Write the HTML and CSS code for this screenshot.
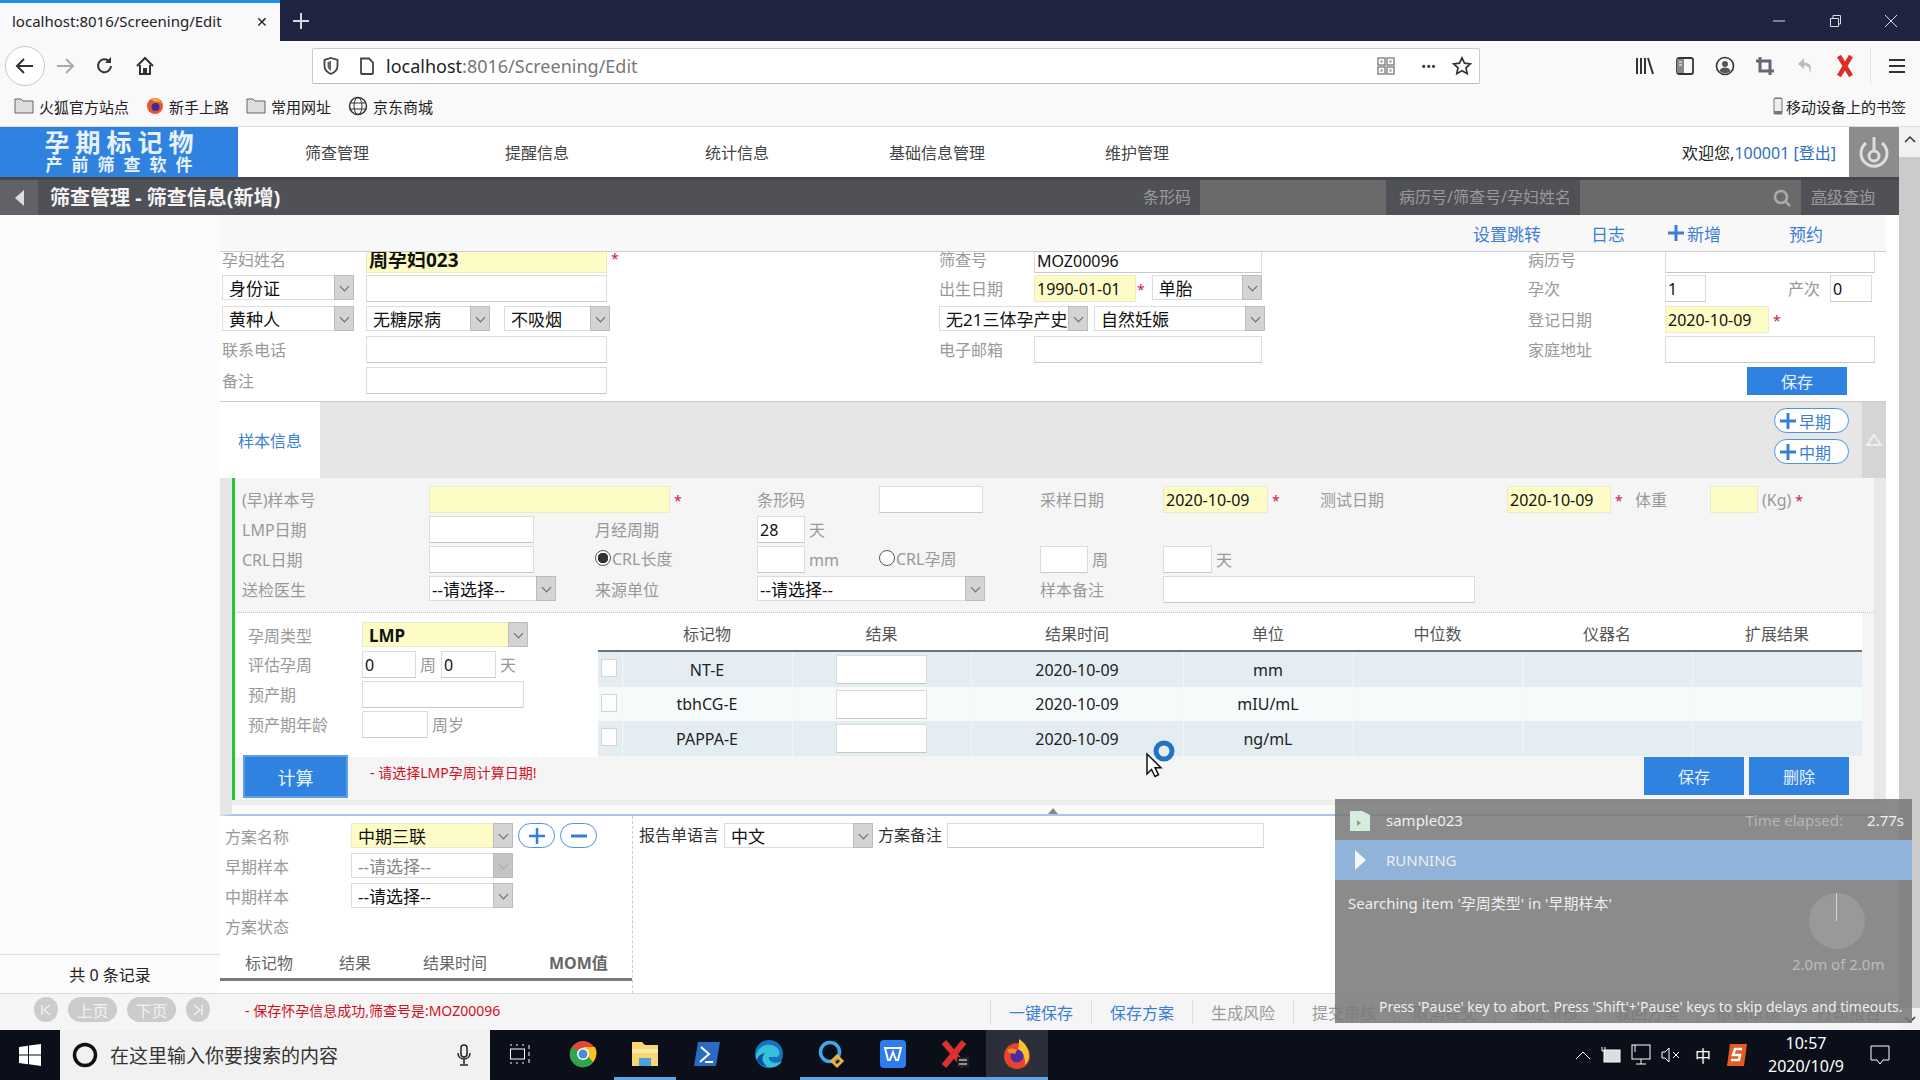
FILE: index.html
```html
<!DOCTYPE html>
<html lang="zh-CN">
<head>
  <meta charset="UTF-8" />
  <title>筛查信息</title>
  <link rel="stylesheet" href="styles.css">
</head>
<body>
  <div class="tabbar">
    <div class="tab"><span class="tab-title">localhost:8016/Screening/Edit</span><span class="tab-close">✕</span></div>
    <svg class="newtab" width="20" height="20" viewBox="0 0 20 20"><path d="M10 2v16M2 10h16" stroke="#d8d8e0" stroke-width="2"/></svg>
    <div class="winctl">
      <svg width="16" height="16" viewBox="0 0 16 16"><path d="M2 8h12" stroke="#ddd" stroke-width="1"/></svg>
      <svg width="16" height="16" viewBox="0 0 16 16"><path d="M3.500 5.500h8v8h-8zM6 5V2.500h7.500V11H12" fill="none" stroke="#ddd"/></svg>
      <svg width="16" height="16" viewBox="0 0 16 16"><path d="M2 2l12 12M14 2L2 14" stroke="#ddd"/></svg>
    </div>
  </div>

  <div class="toolbar">
    <div class="nav-icons">
      <span class="ico back"><svg width="20" height="20" viewBox="0 0 20 20"><path d="M18 10H3M9 3l-7 7 7 7" fill="none" stroke="#333" stroke-width="2"/></svg></span>
      <span class="ico"><svg width="20" height="20" viewBox="0 0 20 20"><path d="M2 10h15M11 3l7 7-7 7" fill="none" stroke="#aaa" stroke-width="2"/></svg></span>
      <span class="ico"><svg width="20" height="20" viewBox="0 0 20 20"><path d="M16 10a6.500 6.500 0 1 1-2-5" fill="none" stroke="#333" stroke-width="2"/><path d="M16 1v6h-6z" fill="#333"/></svg></span>
      <span class="ico"><svg width="20" height="20" viewBox="0 0 20 20"><path d="M2 10l8-8 8 8M5 9v9h4v-5h2v5h4V9" fill="none" stroke="#333" stroke-width="2"/></svg></span>
    </div>
    <div class="urlbar">
      <svg class="url-shield" width="16" height="18" viewBox="0 0 16 18"><path d="M8 1l6.500 2v6c0 4-3 6.500-6.500 8C4.500 15.500 1.500 13 1.500 9V3z" fill="none" stroke="#444" stroke-width="1.800"/><path d="M8 4v10c-2-1-3.500-3-3.500-5V5z" fill="#666"/></svg>
      <svg class="url-page" width="16" height="18" viewBox="0 0 16 18"><path d="M2 1.500h8l4 4V16a1 1 0 0 1-1 1H3a1 1 0 0 1-1-1z" fill="none" stroke="#444" stroke-width="1.800"/></svg>
      <span class="url-text"><b>localhost</b>:8016/Screening/Edit</span>
      <svg class="url-qr" width="18" height="18" viewBox="0 0 18 18"><path d="M1 1h7v7H1zM10 1h7v7h-7zM1 10h7v7H1zM10 10h7v7h-7z" fill="none" stroke="#888" stroke-width="1.500"/><path d="M3.500 3.500h2v2h-2zM12.500 3.500h2v2h-2zM3.500 12.500h2v2h-2zM12.500 12.500h2v2h-2z" fill="#888"/></svg>
      <span class="url-dots">•••</span>
      <svg width="20" height="20" viewBox="0 0 20 20"><path d="M10 1.800l2.500 5.400 5.800.7-4.300 4 1.200 5.800L10 14.800l-5.200 2.900L6 11.900l-4.300-4 5.800-.7z" fill="none" stroke="#333" stroke-width="1.700"/></svg>
    </div>
    <div class="tool-icons">
      <span class="ico"><svg width="20" height="18" viewBox="0 0 20 18"><path d="M2 1v16M6 1v16M10 1v16M13 1l5 16" stroke="#333" stroke-width="2" fill="none"/></svg></span>
      <span class="ico"><svg width="20" height="20" viewBox="0 0 20 20"><rect x="2" y="2" width="16" height="16" rx="2" fill="none" stroke="#333" stroke-width="1.800"/><path d="M2 3h7v14H2z" fill="#888"/><path d="M4 6h3M4 9h3" stroke="#fff"/></svg></span>
      <span class="ico"><svg width="20" height="20" viewBox="0 0 20 20"><circle cx="10" cy="10" r="8.500" fill="none" stroke="#333" stroke-width="1.600"/><circle cx="10" cy="8" r="3" fill="#555"/><path d="M4.500 15c1-3 3-3.500 5.500-3.500s4.500.5 5.500 3.500A8 8 0 0 1 4.500 15z" fill="#555"/></svg></span>
      <span class="ico"><svg width="20" height="20" viewBox="0 0 20 20"><path d="M5 1v14h14M1 5h14v14" fill="none" stroke="#667" stroke-width="3"/></svg></span>
      <span class="ico"><svg width="18" height="20" viewBox="0 0 18 20"><path d="M8 2L2 8l6 5V9.500c4 0 6 2 6 8 2-6 1-11-6-11z" fill="#bbb"/></svg></span>
      <span class="ico"><svg width="16" height="24" viewBox="0 0 16 24"><path d="M2 2l12 20M14 2L2 22" stroke="#e02b2b" stroke-width="4.500"/></svg></span>
    </div>
    <span class="tool-sep"></span>
    <svg class="menu-ico" width="18" height="16" viewBox="0 0 18 16"><path d="M1 2h16M1 8h16M1 14h16" stroke="#333" stroke-width="2"/></svg>
  </div>

  <div class="bookmarks">
    <span class="bm"><svg width="20" height="16" viewBox="0 0 20 16"><path d="M1 1h6l2 2h10v12H1z" fill="#ddd" stroke="#666"/></svg>火狐官方站点</span>
    <span class="bm"><svg width="18" height="18" viewBox="0 0 18 18"><circle cx="9" cy="9" r="8" fill="#e8542c"/><circle cx="9.500" cy="10" r="4" fill="#3b2ba0"/><path d="M5 2c4-2 9 0 11 5-2-2-4-3-7-2z" fill="#f9b32a"/></svg>新手上路</span>
    <span class="bm"><svg width="20" height="16" viewBox="0 0 20 16"><path d="M1 1h6l2 2h10v12H1z" fill="#ddd" stroke="#666"/></svg>常用网址</span>
    <span class="bm"><svg width="20" height="20" viewBox="0 0 20 20"><circle cx="10" cy="10" r="8.500" fill="none" stroke="#333" stroke-width="1.500"/><ellipse cx="10" cy="10" rx="4" ry="8.500" fill="none" stroke="#333"/><path d="M2 7h16M2 13h16" stroke="#333"/></svg>京东商城</span>
    <span class="bm bm-mobile"><svg width="10" height="18" viewBox="0 0 10 18"><rect x="0.500" y="0.500" width="9" height="17" rx="1.500" fill="#777"/><rect x="1.500" y="2" width="7" height="12" fill="#eee"/></svg>移动设备上的书签</span>
  </div>

  <div class="page">
    <div class="page-main">
      <header class="app-header">
        <div class="logo"><span class="logo-main">孕期标记物</span><span class="logo-sub">产前筛查软件</span></div>
        <nav class="main-nav">
          <a>筛查管理</a><a>提醒信息</a><a>统计信息</a><a>基础信息管理</a><a>维护管理</a>
        </nav>
        <div class="welcome">欢迎您,<span class="blue">100001 [登出]</span></div>
        <div class="power"><svg width="32" height="36" viewBox="0 0 32 36"><path d="M8 9a13 13 0 1 0 16 0" fill="none" stroke="#ddd" stroke-width="3"/><path d="M16 3v15" stroke="#ddd" stroke-width="3"/><circle cx="16" cy="22" r="5" fill="none" stroke="#ddd" stroke-width="3"/></svg></div>
      </header>

      <div class="titlebar">
        <span class="title-back"><svg width="12" height="18" viewBox="0 0 12 18"><path d="M11 1L2 9l9 8z" fill="#ddd"/></svg></span>
        <h1>筛查管理 - 筛查信息(新增)</h1>
        <div class="quick-search">
          <label>条形码</label><span class="dark-input dark-barcode"></span>
          <label>病历号/筛查号/孕妇姓名</label><span class="dark-input dark-name"><svg width="18" height="18" viewBox="0 0 18 18"><circle cx="8" cy="8" r="6" fill="none" stroke="#aaa" stroke-width="2.500"/><path d="M12.500 12.500L17 17" stroke="#aaa" stroke-width="2.500"/></svg></span>
          <a>高级查询</a>
        </div>
      </div>

      <div class="workspace">
        <aside class="sidebar"><div class="record-count">共 0 条记录</div></aside>

        <main class="content">
          <div class="link-bar">
            <a class="lb-jump">设置跳转</a><a class="lb-log">日志</a><a class="lb-add"><svg class="plus" width="16" height="16" viewBox="0 0 16 16"><path d="M8 0v16M0 8h16" stroke="#3a7fd5" stroke-width="3"/></svg>新增</a><a class="lb-book">预约</a>
          </div>

          <section class="patient-form">
            <span class="lbl r1">孕妇姓名</span>
            <div class="r1"><input class="inp yellow strong clip w241" value="周孕妇023"><i class="star">*</i></div>
            <span class="lbl r1">筛查号</span>
            <div class="r1"><input class="inp clip w228" value="MOZ00096"></div>
            <span class="lbl r1">病历号</span>
            <div class="r1"><input class="inp clip w210"></div>

            <div><div class="sel w132"><span>身份证</span><i></i></div></div>
            <div><input class="inp w241"></div>
            <span class="lbl">出生日期</span>
            <div class="fld"><input class="inp yellow w102" value="1990-01-01"><i class="star gap-star">*</i><div class="sel w110"><span>单胎</span><i></i></div></div>
            <span class="lbl">孕次</span>
            <div class="fld"><input class="inp w41" value="1"><span class="lbl w124 end">产次</span><input class="inp w42" value="0"></div>

            <div><div class="sel w132"><span>黄种人</span><i></i></div></div>
            <div class="fld fld14"><div class="sel w124"><span>无糖尿病</span><i></i></div><div class="sel w106"><span>不吸烟</span><i></i></div></div>
            <div class="span2 fld fld6"><div class="sel w149"><span>无21三体孕产史</span><i></i></div><div class="sel w171"><span>自然妊娠</span><i></i></div></div>
            <span class="lbl">登记日期</span>
            <div><input class="inp yellow w104" value="2020-10-09"><i class="star">*</i></div>

            <span class="lbl">联系电话</span>
            <div><input class="inp w241"></div>
            <span class="lbl">电子邮箱</span>
            <div><input class="inp w228"></div>
            <span class="lbl">家庭地址</span>
            <div><input class="inp w210"></div>

            <span class="lbl">备注</span>
            <div><input class="inp w241"></div>
            <span></span><span></span><span></span>
            <div><button class="btn save-top">保存</button></div>
          </section>

          <section class="tabs-bar">
            <a class="tab-sample">样本信息</a>
            <div class="add-stage">
              <a class="pill"><svg class="plus" width="16" height="16" viewBox="0 0 16 16"><path d="M8 0v16M0 8h16" stroke="#3a7fd5" stroke-width="3"/></svg>早期</a>
              <a class="pill"><svg class="plus" width="16" height="16" viewBox="0 0 16 16"><path d="M8 0v16M0 8h16" stroke="#3a7fd5" stroke-width="3"/></svg>中期</a>
            </div>
            <span class="collapse-handle"><svg width="18" height="14" viewBox="0 0 18 14"><path d="M9 2l7 10H2z" fill="none" stroke="#eee" stroke-width="2"/></svg></span>
          </section>

          <section class="sample-wrap">
            <div class="sample">
              <div class="sample-form">
                <span class="lbl">(早)样本号</span>
                <div class="span2"><input class="inp yellow w241"><i class="star">*</i></div>
                <span class="lbl">条形码</span>
                <div><input class="inp w104"></div>
                <span class="lbl">采样日期</span>
                <div><input class="inp yellow w105" value="2020-10-09"><i class="star">*</i></div>
                <span class="lbl">测试日期</span>
                <div><input class="inp yellow w104" value="2020-10-09"><i class="star">*</i></div>
                <span class="lbl">体重</span>
                <div class="fld"><input class="inp yellow w48"><span class="lbl unit">(Kg)</span><i class="star">*</i></div>

                <span class="lbl">LMP日期</span>
                <div><input class="inp w105"></div>
                <span class="lbl">月经周期</span>
                <div class="fld"><input class="inp w48" value="28"><span class="lbl unit">天</span></div>
                <span class="row-end"></span>

                <span class="lbl">CRL日期</span>
                <div><input class="inp w105"></div>
                <label class="lbl radio"><i class="dot on"></i>CRL长度</label>
                <div class="fld"><input class="inp w48"><span class="lbl unit">mm</span></div>
                <label class="lbl radio"><i class="dot"></i>CRL孕周</label>
                <div class="fld"><input class="inp w48"><span class="lbl unit">周</span></div>
                <div class="fld"><input class="inp w49"><span class="lbl unit">天</span></div>
                <span class="row-end"></span>

                <span class="lbl">送检医生</span>
                <div><div class="sel w127 tight"><span>--请选择--</span><i></i></div></div>
                <span class="lbl">来源单位</span>
                <div class="span2"><div class="sel w228 tight"><span>--请选择--</span><i></i></div></div>
                <span class="lbl">样本备注</span>
                <div class="span3"><input class="inp w312"></div>
              </div>

              <div class="marker-panel">
                <div class="gest-form">
                  <span class="lbl">孕周类型</span>
                  <div><div class="sel w166 yellow"><span class="strong">LMP</span><i></i></div></div>
                  <span class="lbl">评估孕周</span>
                  <div class="fld"><input class="inp w54" value="0"><span class="lbl unit">周</span><input class="inp w55 ml4" value="0"><span class="lbl unit">天</span></div>
                  <span class="lbl">预产期</span>
                  <div><input class="inp w162"></div>
                  <span class="lbl">预产期年龄</span>
                  <div class="fld"><input class="inp w66"><span class="lbl unit">周岁</span></div>
                </div>
                <table class="markers">
                  <colgroup>
                    <col class="c-check"><col class="c-name"><col class="c-result"><col class="c-time"><col class="c-w1"><col class="c-w2"><col class="c-w1"><col class="c-w1">
                  </colgroup>
                  <thead>
                    <tr><th></th><th>标记物</th><th>结果</th><th>结果时间</th><th>单位</th><th>中位数</th><th>仪器名</th><th>扩展结果</th></tr>
                  </thead>
                  <tbody>
                    <tr class="h36"><td><span class="check"></span></td><td>NT-E</td><td><input class="inp result"></td><td>2020-10-09</td><td>mm</td><td></td><td></td><td></td></tr>
                    <tr class="h34"><td><span class="check"></span></td><td>tbhCG-E</td><td><input class="inp result"></td><td>2020-10-09</td><td>mIU/mL</td><td></td><td></td><td></td></tr>
                    <tr class="h35"><td><span class="check"></span></td><td>PAPPA-E</td><td><input class="inp result"></td><td>2020-10-09</td><td>ng/mL</td><td></td><td></td><td></td></tr>
                  </tbody>
                </table>
              </div>

              <div class="sample-actions">
                <button class="btn calc">计算</button>
                <span class="msg">- 请选择LMP孕周计算日期!</span>
                <button class="btn action">保存</button>
                <button class="btn action">删除</button>
              </div>
            </div>
          </section>

          <div class="split-strip"><span class="split-arrow"></span></div>

          <section class="plan">
            <div class="plan-left">
              <div class="plan-form">
                <span class="lbl">方案名称</span>
                <div class="fld"><div class="sel w162 yellow"><span>中期三联</span><i></i></div><a class="round"><svg class="plus" width="16" height="16" viewBox="0 0 16 16"><path d="M8 0v16M0 8h16" stroke="#2f7fdc" stroke-width="2.500"/></svg></a><a class="round"><svg class="plus" width="16" height="16" viewBox="0 0 16 16"><path d="M0 8h16" stroke="#2f7fdc" stroke-width="3"/></svg></a></div>
                <span class="lbl">早期样本</span>
                <div><div class="sel w162 disabled"><span>--请选择--</span><i></i></div></div>
                <span class="lbl">中期样本</span>
                <div><div class="sel w162"><span>--请选择--</span><i></i></div></div>
                <span class="lbl">方案状态</span>
                <div></div>
              </div>
              <div class="plan-head"><span class="ph1">标记物</span><span class="ph2">结果</span><span class="ph3">结果时间</span><span class="ph4">MOM值</span></div>
            </div>
            <div class="plan-right">
              <span class="dark-lbl">报告单语言</span>
              <div class="sel w149"><span>中文</span><i></i></div>
              <span class="dark-lbl">方案备注</span>
              <input class="inp w317">
            </div>
          </section>
        </main>
      </div>

      <footer class="statusbar">
        <div class="pager">
          <a class="pg-round"><svg width="12" height="12" viewBox="0 0 12 12"><path d="M2 1v10M10 1L4 6l6 5" fill="none" stroke="#f0f0f0" stroke-width="1.500"/></svg></a><a class="pg-text">上页</a><a class="pg-text">下页</a><a class="pg-round"><svg width="12" height="12" viewBox="0 0 12 12"><path d="M10 1v10M2 1l6 5-6 5" fill="none" stroke="#f0f0f0" stroke-width="1.500"/></svg></a>
        </div>
        <span class="msg">- 保存怀孕信息成功,筛查号是:MOZ00096</span>
        <div class="actions">
          <a class="on">一键保存</a><a class="on">保存方案</a><a>生成风险</a><a>提交审核</a><a>取消提交</a><a>通过审核</a><a>驳回方案</a><a>撤销审核</a><a>打印报告</a>
        </div>
      </footer>
    </div>
    <div class="scrollbar">
      <svg width="12" height="8" viewBox="0 0 12 8"><path d="M1 7l5-5 5 5" fill="none" stroke="#333" stroke-width="1.500"/></svg>
      <span class="thumb"></span>
      <svg width="12" height="8" viewBox="0 0 12 8"><path d="M1 1l5 5 5-5" fill="none" stroke="#333" stroke-width="1.500"/></svg>
    </div>
  </div>

  <div class="taskbar">
    <span class="start"><svg width="22" height="22" viewBox="0 0 22 22"><path d="M0 3l9-1.300V10.500H0zM10 1.500L22 0v10.500H10zM0 11.500h9v8.800L0 19zM10 11.500h12V22l-12-1.700z" fill="#fff"/></svg></span>
    <div class="task-search">
      <svg width="26" height="26" viewBox="0 0 26 26"><circle cx="13" cy="13" r="10.500" fill="none" stroke="#111" stroke-width="3.500"/></svg>
      <span>在这里输入你要搜索的内容</span>
      <svg class="mic" width="14" height="22" viewBox="0 0 14 22"><rect x="4" y="1" width="6" height="12" rx="3" fill="none" stroke="#222" stroke-width="1.500"/><path d="M1 9c0 8 12 8 12 0M7 15v5M3 21h8" fill="none" stroke="#222" stroke-width="1.500"/></svg>
    </div>
    <span class="task-item"><svg width="24" height="22" viewBox="0 0 24 22"><path d="M2 1v2M8 1v2M14 1v2M2 19v2M8 19v2M14 19v2M20 2v4M20 9v4M20 16v4" stroke="#fff"/><rect x="1.500" y="6" width="14" height="10" fill="none" stroke="#fff"/></svg></span>
    <span class="task-item"><svg width="28" height="28" viewBox="0 0 28 28"><circle cx="14" cy="14" r="13" fill="#dd4a3c"/><path d="M14 14L25 21A13 13 0 0 1 8 26z" fill="#2fa550"/><path d="M14 14L8 26A13 13 0 0 1 3 7z" fill="#2fa550"/><path d="M14 7h12a13 13 0 0 1-2 15l-7-8z" fill="#f7c325"/><circle cx="14" cy="14" r="6" fill="#fff"/><circle cx="14" cy="14" r="4.500" fill="#4a89dc"/></svg></span>
    <span class="task-item running"><svg width="28" height="28" viewBox="0 0 28 28"><path d="M1 2h10l3 3h13v21H1z" fill="#f7d774"/><path d="M1 9h26v4H1z" fill="#fbe9a8"/><path d="M8 18h12v8H8z" fill="#4aa3df"/></svg></span>
    <span class="task-item"><svg width="28" height="28" viewBox="0 0 28 28"><path d="M5 2h22l-4 24H1z" fill="#2a6cc4"/><path d="M8 7l8 7-9 8M12 22h8" fill="none" stroke="#fff" stroke-width="2"/></svg></span>
    <span class="task-item"><svg width="30" height="30" viewBox="0 0 30 30"><circle cx="15" cy="15" r="14" fill="#1670c4"/><path d="M2 17C3 7 14 3 22 8c4 3 5 8 1 10h-8c-1 5 7 8 13 4-3 6-11 8-17 5C6 25 2 22 2 17z" fill="#35c1d8"/><path d="M13 27c-5-3-6-9-2-13-5 1-8 4-8 8 2 3 6 5 10 5z" fill="#0d4f9e"/></svg></span>
    <span class="task-item running"><svg width="28" height="30" viewBox="0 0 28 30"><circle cx="13" cy="13" r="9.500" fill="none" stroke="#3fa8e8" stroke-width="3.500"/><path d="M15 22l5-5 5 5-5 5z" fill="none" stroke="#f2b233" stroke-width="3"/></svg></span>
    <span class="task-item running"><svg width="28" height="30" viewBox="0 0 28 30"><rect x="1" y="1" width="26" height="28" rx="4" fill="#2c7df0"/><path d="M6 9h16l-3 12h-2l-3-8-3 8H9z" fill="none" stroke="#fff" stroke-width="2"/></svg></span>
    <span class="task-item running"><svg width="30" height="30" viewBox="0 0 30 30"><path d="M4 3l20 24M24 3L4 27" stroke="#d93030" stroke-width="6"/><path d="M17 18h12v10H17z" fill="#222"/><path d="M19 21h8M19 25h8" stroke="#fff"/></svg></span>
    <span class="task-item active"><svg width="30" height="32" viewBox="0 0 30 32"><circle cx="15" cy="18" r="13" fill="#e8432e"/><path d="M17 1c6 4 10 9 10 17 0 4-2 7-4 9 1-8-3-12-7-16 1-3 1-7 1-10z" fill="#f9c32a"/><circle cx="15" cy="18" r="6.500" fill="#4b2aa8"/><path d="M5 12c3-2 7-2 10 0l-2 4c-3-1-6 0-8-4z" fill="#f78b1f"/></svg></span>
    <div class="tray">
      <svg width="16" height="10" viewBox="0 0 16 10"><path d="M1 9l7-7 7 7" fill="none" stroke="#fff"/></svg>
      <svg width="20" height="18" viewBox="0 0 20 18"><rect x="3" y="4" width="16" height="12" fill="#ddd" stroke="#fff"/><path d="M1 1v4h3V1" fill="none" stroke="#fff"/></svg>
      <svg width="20" height="22" viewBox="0 0 20 22"><rect x="1" y="1" width="18" height="14" fill="none" stroke="#fff"/><path d="M10 15v5M5 20h10M4 1v7" stroke="#fff"/></svg>
      <svg width="20" height="18" viewBox="0 0 20 18"><path d="M1 6h3l4-4v14l-4-4H1zM12 6l6 6M18 6l-6 6" fill="none" stroke="#fff"/></svg>
      <span class="ime">中</span>
      <svg class="sogou" width="22" height="24" viewBox="0 0 22 24"><path d="M4 1h17l-3 22H1z" fill="#e85a22"/><path d="M16 6H9L7 12h7l-1 5H5" fill="none" stroke="#fff" stroke-width="2.500"/></svg>
      <div class="clock"><span>10:57</span><span>2020/10/9</span></div>
      <svg class="notify" width="20" height="20" viewBox="0 0 20 20"><path d="M1 1h18v14h-6l-3 4-3-4H1z" fill="none" stroke="#fff"/></svg>
    </div>
  </div>

  <!-- automation progress window, floats over the page -->
  <div class="runner">
    <div class="runner-head">
      <svg width="22" height="24" viewBox="0 0 22 24"><path d="M1 3h12l8 4v16H1z" fill="#d5ecdf"/><path d="M8 12l4 3-4 3z" fill="#8a9a90"/></svg>
      <span class="runner-name">sample023</span>
      <span class="runner-time">Time elapsed:</span>
      <span class="runner-secs">2.77s</span>
    </div>
    <div class="runner-state"><svg width="13" height="22" viewBox="0 0 13 22"><path d="M1 1l11 10L1 21z" fill="#f2f5fa"/></svg><span>RUNNING</span></div>
    <div class="runner-body">
      <p>Searching item '孕周类型' in '早期样本'</p>
      <span class="runner-dial"></span>
      <span class="runner-of">2.0m of 2.0m</span>
      <p class="runner-hint">Press 'Pause' key to abort. Press 'Shift'+'Pause' keys to skip delays and timeouts.</p>
    </div>
  </div>

  <div class="mouse">
    <svg width="32" height="40" viewBox="0 0 32 40"><path d="M3 14v20l4.500-4.500 3.500 7 3.500-1.800-3.500-7h6z" fill="#fff" stroke="#111" stroke-width="1.500"/><circle cx="20" cy="11" r="8" fill="none" stroke="#1f74c4" stroke-width="5"/></svg>
  </div>
</body>
</html>
```

FILE: styles.css
```css
* { box-sizing: border-box; }
html, body { margin: 0; height: 1080px; overflow: hidden; }
body { position: relative; width: 1920px; font-family: "Noto Sans", "Noto Sans CJK SC", sans-serif; font-size: 16px; color: #222; background: #fff; }
a { cursor: pointer; }
h1, p { margin: 0; }

/* browser chrome */
.tabbar { height: 41px; background: #1f2440; display: flex; align-items: center; }
.tab { width: 280px; height: 41px; background: #f9f9fb; border-top: 3px solid #1e8fee; display: flex; align-items: center; padding: 0 12px 2px; font-size: 15px; }
.tab-title { flex: 1; white-space: nowrap; }
.tab-close { font-size: 14px; color: #222; }
.newtab { margin-left: 11px; }
.winctl { margin-left: auto; display: flex; gap: 40px; padding-right: 21px; }
.toolbar { height: 45px; padding-top: 5px; background: #f9f9fa; display: flex; align-items: center; }
.nav-icons { display: flex; margin-left: 5px; }
.ico { width: 40px; height: 40px; display: flex; align-items: center; justify-content: center; }
.ico.back { border: 1px solid #c8c8c8; border-radius: 50%; background: #fff; }
.urlbar { width: 1168px; height: 36px; margin-left: 147px; background: #fff; border: 1px solid #ccc; border-bottom-color: #bbb; border-radius: 2px; display: flex; align-items: center; padding-right: 7px; }
.url-shield { margin-left: 10px; }
.url-page { margin-left: 20px; }
.url-text { margin-left: 11px; font-size: 18px; color: #777; flex: 1; }
.url-text b { font-weight: 400; color: #222; }
.url-qr { margin-right: 8px; }
.url-dots { margin: 0 16px 0 18px; font-size: 13px; color: #333; }
.tool-icons { display: flex; margin-left: 145px; }
.tool-sep { width: 1px; height: 36px; background: #e4e4e4; margin-left: 5px; }
.menu-ico { margin-left: 17px; }
.bookmarks { height: 41px; background: #f9f9fa; border-bottom: 1px solid #ddd; display: flex; align-items: center; padding: 0 14px; font-size: 15px; gap: 17px; }
.bm { display: flex; align-items: center; gap: 5px; white-space: nowrap; }
.bm-mobile { margin-left: auto; gap: 3px; }

/* application layout */
.page { display: flex; height: 903px; }
.page-main { width: 1899px; display: flex; flex-direction: column; }
.scrollbar { width: 21px; background: #f1f1f1; display: flex; flex-direction: column; align-items: center; padding-top: 8px; gap: 8px; }
.thumb { width: 21px; flex: 1; background: #cbcbcb; }
.scrollbar svg { flex: none; margin-bottom: 6px; }

.app-header { height: 50px; display: flex; align-items: center; flex: none; }
.logo { width: 238px; height: 50px; background: #2f82e0; color: #e8f2fc; display: flex; flex-direction: column; align-items: center; font-weight: 700; line-height: 1; padding-top: 3px; }
.logo-main { font-size: 25px; letter-spacing: 6px; margin-right: -6px; }
.logo-sub { font-size: 17px; letter-spacing: 9px; margin-right: -9px; margin-top: 1px; }
.main-nav { display: flex; margin-left: -1px; }
.main-nav a { width: 200px; text-align: center; color: #444; font-size: 16px; }
.welcome { margin-left: auto; padding-right: 13px; font-size: 16px; color: #222; white-space: nowrap; }
.blue { color: #2f6fbe; }
.power { width: 50px; height: 50px; background: #8c8c8c; display: flex; align-items: center; justify-content: center; }

.titlebar { height: 38px; flex: none; background: #505157; border-top: 3px solid #46474c; display: flex; align-items: center; }
.title-back { width: 38px; height: 35px; background: #616268; display: flex; align-items: center; justify-content: center; }
.titlebar h1 { margin: -3px 0 0 12px; font-size: 20px; font-weight: 700; color: #f4f4f4; white-space: nowrap; }
.quick-search { margin-left: auto; height: 35px; display: flex; align-items: center; font-size: 16px; color: #999; padding-right: 24px; }
.quick-search label { margin-right: 9px; white-space: nowrap; margin-top: -3px; }
.quick-search a { margin-top: -3px; text-decoration: underline; }
.dark-input { height: 35px; background: #6a6a6a; display: flex; align-items: center; justify-content: flex-end; padding-right: 10px; margin-right: 13px; }
.dark-barcode { width: 186px; }
.dark-name { width: 221px; margin-right: 10px; }

.workspace { flex: 1; min-height: 0; display: flex; }
.sidebar { width: 220px; background: #fbfbfb; display: flex; flex-direction: column; justify-content: flex-end; }
.record-count { height: 39px; border-top: 1px solid #ddd; display: flex; align-items: center; justify-content: center; font-size: 16px; }
.content { flex: 1; min-width: 0; padding-right: 13px; }

.link-bar { height: 37px; background: #f8f8f8; border-bottom: 1px solid #ccc; color: #3a7fd5; font-size: 17px; display: flex; align-items: center; padding-left: 1253px; }
.link-bar a { white-space: nowrap; display: flex; align-items: center; }
.plus { flex: none; margin-right: 3px; }
.lb-log { margin-left: 50px; }
.lb-add { margin-left: 43px; }
.lb-book { margin-left: 68px; }

/* form bits */
.lbl { color: #999; font-size: 16px; line-height: 29px; height: 27px; white-space: nowrap; display: block; }
.inp { display: inline-block; height: 27px; border: 1px solid #dcdcdc; border-bottom-color: #c8c8c8; background: #fff; padding: 0 2px; font: 16px "Noto Sans", "Noto Sans CJK SC", sans-serif; color: #111; vertical-align: top; outline: none; }
.inp.yellow { background: #fdfcc6; border-color: #ece9c6; }
.strong { font-weight: 700; }
.inp.strong { font-size: 19px; }
.inp.clip { height: 21px; border-top: 0; padding-bottom: 3px; }
.inp.clip.strong { padding-bottom: 7px; }
.star { color: #d0204a; font-style: normal; font-size: 14px; margin-left: 4px; vertical-align: top; line-height: 30px; }
.r1 .star { line-height: 14px; }
.gap-star { margin-right: 7px; margin-left: 1px; }
.fld { display: flex; align-items: flex-start; }
.fld14 { gap: 14px; }
.fld6 { gap: 6px; }
.unit { margin-left: 4px; }
.end { text-align: right; padding-right: 10px; }
.ml4 { margin-left: 5px; }
.sel { height: 25px; display: inline-flex; align-items: stretch; background: #fff; border: 1px solid #dcdcdc; font-size: 17px; line-height: 25px; color: #111; padding-left: 6px; white-space: nowrap; vertical-align: top; }
.sel span { flex: 1; overflow: hidden; }
.sel i { width: 20px; flex: none; margin: -1px -1px -1px 0; background: #d4d4d4; border: 1px solid #bbb; position: relative; }
.sel i::after { content: ""; position: absolute; left: 6px; top: 7px; width: 6px; height: 6px; border: solid #666; border-width: 0 1px 1px 0; transform: rotate(45deg); }
.sel.tight { padding-left: 2px; }
.sel.yellow { background: #fdfcc6; border-color: #ece9c6; }
.sel.disabled span { color: #888; }
.sel.disabled i { background: #c4c4c4; }
.sel.disabled i::after { border-color: #aaa; }

.w41 { width: 41px; } .w42 { width: 42px; } .w48 { width: 48px; } .w49 { width: 49px; }
.w54 { width: 54px; } .w55 { width: 55px; } .w66 { width: 66px; }
.w102 { width: 102px; } .w104 { width: 104px; } .w105 { width: 105px; } .w106 { width: 106px; }
.w110 { width: 110px; } .w124 { width: 124px; } .w127 { width: 127px; } .w132 { width: 132px; }
.w149 { width: 149px; } .w162 { width: 162px; } .w166 { width: 166px; } .w171 { width: 171px; }
.w210 { width: 210px; } .w228 { width: 228px; } .w241 { width: 241px; } .w312 { width: 312px; } .w317 { width: 317px; }

.btn { border: 0; background: #2f82e0; color: #e8f2fc; font: 16px "Noto Sans", "Noto Sans CJK SC", sans-serif; cursor: pointer; }

/* patient block */
.patient-form { height: 150px; padding-left: 2px; background: #fff; border-bottom: 1px solid #ccc; overflow: hidden; display: grid; grid-template-columns: 144px 573px 95px 494px 137px 1fr; grid-template-rows: 23px 31px 30px 31px 34px; }
.patient-form .lbl.r1 { height: 20px; line-height: 16px; }
.span2 { grid-column: span 2; white-space: nowrap; }
.save-top { width: 100px; height: 28px; margin-left: 82px; }

/* tabs */
.tabs-bar { height: 76px; background: #e6e6e6; display: flex; position: relative; }
.tab-sample { width: 100px; background: #fff; color: #3a7fd5; display: flex; align-items: center; justify-content: center; font-size: 16px; }
.add-stage { position: absolute; left: 1554px; top: 6px; display: flex; flex-direction: column; gap: 6px; }
.pill { width: 75px; height: 25px; border: 1px solid #4d93e0; border-radius: 13px; background: #fff; color: #3a7fd5; font-size: 16px; display: flex; align-items: center; padding-left: 5px; white-space: nowrap; }
.collapse-handle { position: absolute; left: 1642px; top: 0; width: 24px; height: 76px; background: #d5d5d5; display: flex; align-items: center; justify-content: center; }

/* sample block */
.sample-wrap { border-left: 12px solid #e6e6e6; border-right: 12px solid #e8e8e8; background: #f5f5f5; }
.sample { border-left: 3px solid #1fc92f; height: 322px; display: flex; flex-direction: column; background: #f5f5f5; }
.sample-form { height: 135px; flex: none; padding: 8px 0 0 7px; border-bottom: 1px dotted #c4c4c4; display: grid; grid-template-columns: 187px 166px 162px 122px 161px 123px 157px 187px 128px 75px 1fr; grid-auto-rows: 30px; }
.row-end { grid-column-end: -1; }
.span3 { grid-column: span 3; }
.radio { display: flex; align-items: center; }
.dot { width: 16px; height: 16px; border: 1px solid #555; border-radius: 50%; background: #fff; margin-right: 1px; margin-top: -3px; flex: none; }
.dot.on { background: radial-gradient(circle, #333 0 5px, #fff 5.500px); }

.marker-panel { height: 144px; flex: none; display: flex; }
.gest-form { width: 363px; flex: none; background: #fff; padding: 9px 0 0 13px; display: grid; grid-template-columns: 114px 1fr; grid-template-rows: 29px 30px 30px 30px; align-content: start; }
.markers { width: 1264px; flex: none; border-collapse: collapse; table-layout: fixed; background: #fff; align-self: flex-start; }
.c-check { width: 24px; } .c-name { width: 170px; } .c-result { width: 179px; } .c-time { width: 212px; }
.c-w1 { width: 170px; } .c-w2 { width: 169px; }
.markers th { height: 38px; font-weight: 400; font-size: 16px; color: #555; border-bottom: 2px solid #69767e; padding: 2px 0 0; }
.markers td { padding: 0; text-align: center; font-size: 16px; line-height: 1; color: #222; border-left: 1px solid #f2f7f7; }
.markers td:first-child { border-left: 0; text-align: left; padding-left: 3px; }
.markers tbody tr:nth-child(odd) { background: #e4edf2; }
.markers tbody tr:nth-child(even) { background: #f5fbfb; }
.h36 { height: 36px; } .h34 { height: 34px; } .h35 { height: 35px; }
.check { display: block; width: 16px; height: 18px; margin-top: -3px; background: #fdfdfd; border: 1px solid #d4d4d4; }
.inp.result { width: 91px; height: 29px; display: block; margin: 0 auto; }

.sample-actions { height: 38px; flex: none; display: flex; align-items: flex-start; padding-left: 8px; padding-right: 25px; }
.calc { width: 105px; height: 43px; margin-top: -2px; position: relative; border: 1px solid #bfdcf7; outline: 2px solid #5e9fe6; outline-offset: -2px; font-size: 18px; }
.msg { color: #d0101e; font-size: 14px; white-space: nowrap; }
.sample-actions .msg { margin: 5px 0 0 22px; }
.action { width: 100px; height: 38px; margin-left: 5px; }
.sample-actions .action:nth-of-type(2) { margin-left: auto; }
.split-strip { height: 16px; background: linear-gradient(#ededed 0 0) top/100% 5px no-repeat, #fbfbf7; border-left: 12px solid #e6e6e6; border-bottom: 2px solid #a9c7ea; position: relative; }
.split-arrow { position: absolute; left: 816px; top: 8px; border: 5px solid transparent; border-top: 0; border-bottom: 6px solid #888; }

/* plan block */
.plan { display: flex; height: 177px; background: #fff; }
.plan-left { width: 413px; flex: none; border-right: 1px dashed #ccc; padding-top: 7px; display: flex; flex-direction: column; }
.plan-form { padding-left: 5px; display: grid; grid-template-columns: 126px 1fr; grid-template-rows: 30px 30px 30px 30px; }
.round { width: 37px; height: 25px; margin-left: 5px; border: 1px solid #4d93e0; border-radius: 13px; display: flex; align-items: center; justify-content: center; flex: none; }
.round .plus { margin: 0; }
.plan-head { height: 33px; margin-top: 5px; border-bottom: 3px solid #7a7a80; position: relative; font-size: 16px; color: #666; white-space: nowrap; }
.plan-head span { position: absolute; top: 1px; line-height: 29px; }
.ph1 { left: 25px; } .ph2 { left: 119px; } .ph3 { left: 203px; } .ph4 { left: 329px; font-weight: 700; }
.plan-right { padding: 7px 0 0 6px; display: flex; align-items: flex-start; gap: 5px; flex: 1; }
.dark-lbl { color: #333; font-size: 16px; line-height: 25px; white-space: nowrap; }
.plan-right .inp { height: 25px; }

/* footer */
.statusbar { height: 37px; flex: none; background: #f5f5f5; border-top: 1px solid #ddd; display: flex; align-items: center; }
.pager { display: flex; margin: -5px 0 0 34px; gap: 10px; color: #f0f0f0; font-size: 16px; width: 176px; flex: none; }
.pager a { height: 25px; background: #ccc; border-radius: 13px; display: flex; align-items: center; justify-content: center; }
.pg-round { width: 24px; }
.pg-text { width: 49px; }
.statusbar .msg { margin: -4px 0 0 35px; }
.actions { margin-left: auto; display: flex; color: #999; font-size: 16px; }
.actions a { width: 101px; text-align: center; border-left: 1px solid #ddd; white-space: nowrap; }
.actions .on { color: #3a7fd5; }

/* taskbar */
.taskbar { height: 50px; background: #0b0f1a; display: flex; align-items: center; }
.start { width: 60px; display: flex; justify-content: center; }
.task-search { width: 430px; height: 50px; background: #f1f1f1; display: flex; align-items: center; padding-left: 12px; gap: 12px; font-size: 19px; color: #333; }
.task-search .mic { margin-left: auto; margin-right: 19px; }
.task-item { width: 62px; height: 50px; display: flex; align-items: center; justify-content: center; flex: none; border-bottom: 3px solid transparent; }
.task-item.running { border-bottom-color: #5aa6e6; }
.task-item.active { background: #2b2f3b; border-bottom-color: #5aa6e6; }
.tray { margin-left: auto; display: flex; align-items: center; gap: 10px; color: #fff; padding-right: 30px; }
.ime { font-size: 16px; margin-left: 4px; }
.sogou { margin-left: 5px; }
.clock { display: flex; flex-direction: column; align-items: center; font-size: 16px; line-height: 23px; width: 90px; margin: 0 9px 0 3px; }

/* floating bits */
.runner { position: absolute; left: 1335px; top: 799px; width: 577px; height: 224px; background: rgba(120, 120, 120, .86); color: #eee; font-size: 15px; }
.runner-head { height: 41px; display: flex; align-items: center; padding: 0 8px 0 14px; white-space: nowrap; }
.runner-name { margin-left: 15px; }
.runner-time { margin-left: auto; color: #b5b5b5; }
.runner-secs { margin-left: 24px; }
.runner-state { height: 40px; background: #8fb3d9; display: flex; align-items: center; padding-left: 19px; gap: 19px; }
.runner-body { position: relative; height: 143px; padding: 12px 13px; }
.runner-dial { position: absolute; left: 474px; top: 13px; width: 56px; height: 56px; border-radius: 50%; background: rgba(160, 160, 160, .7); }
.runner-dial::after { content: ""; position: absolute; left: 27px; top: 0; width: 1px; height: 28px; background: #c5d6ea; }
.runner-of { position: absolute; left: 457px; top: 74px; color: #bdbdbd; font-size: 15px; white-space: nowrap; }
.runner-hint { position: absolute; left: 44px; top: 117px; font-size: 14px; white-space: nowrap; }
.mouse { position: absolute; left: 1144px; top: 740px; width: 32px; height: 40px; }
```
